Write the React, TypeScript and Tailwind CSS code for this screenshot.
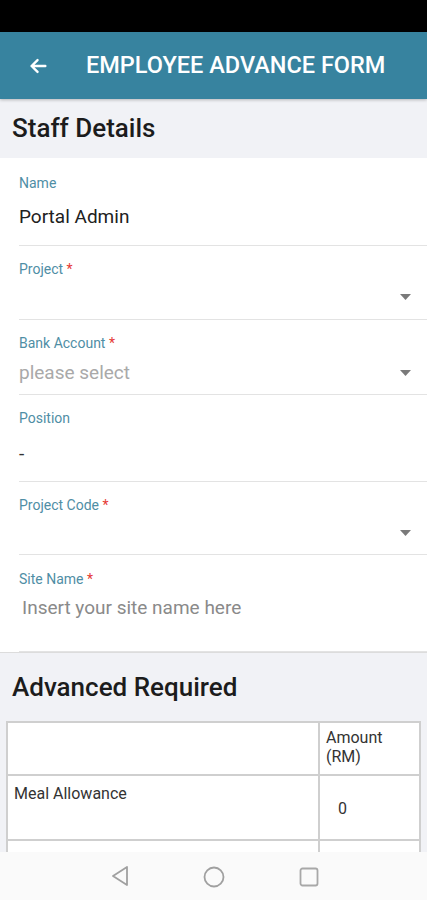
import { ReactNode } from 'react';

const Caret = () => (
  <svg width="11" height="6" viewBox="0 0 11 6" className="mr-[16px]">
    <path d="M0 0 L11 0 L5.5 6 Z" fill="#7a7a7a" />
  </svg>
);

function Field({ label, required = false, h, pt = 'pt-[15px]', mt, children }: {
  label: string; required?: boolean; h: string; pt?: string; mt: string; children: ReactNode;
}) {
  return (
    <div className={`ml-[19px] border-b border-[#e3e3e3] ${h} ${pt}`}>
      <div className="text-[14px] leading-[16px] text-[#4f8ea5]">
        {label}
        {required && <span className="text-[#e53935]"> *</span>}
      </div>
      <div className={`${mt} h-[24px] flex items-center justify-between`}>{children}</div>
    </div>
  );
}

const rows = [
  { label: 'Meal Allowance', amount: '0' },
  { label: 'Accommodation / Hotel', amount: '0' },
];

export default function App() {
  return (
    <div className="w-[427px] min-h-[900px] bg-[#f1f2f6] font-['Roboto',sans-serif] pb-[48px]">
      {/* status bar */}
      <div className="h-[32px] bg-black" />

      {/* app bar */}
      <div className="h-[67px] bg-[#37839f] flex items-center shadow-[0_1px_3px_rgba(0,0,0,0.25)]">
        <svg width="22" height="22" viewBox="0 0 24 24" className="ml-[27px]">
          <path d="M20 12H5 M11.5 5.5L5 12l6.5 6.5" fill="none" stroke="#fff" strokeWidth="2.6" strokeLinecap="round" strokeLinejoin="round" />
        </svg>
        <h1 className="ml-[37px] text-white text-[23.5px] font-medium">EMPLOYEE ADVANCE FORM</h1>
      </div>

      {/* staff details */}
      <div className="h-[59px] flex items-center px-[12px]">
        <h2 className="text-[26px] text-[#1c1c1c] font-medium">Staff Details</h2>
      </div>

      <div className="bg-white border-b border-[#dcdcdc]">
        <Field label="Name" h="h-[88px]" pt="pt-[17px]" mt="mt-[14px]">
          <span className="text-[19px] text-[#212121]">Portal Admin</span>
        </Field>
        <Field label="Project" required h="h-[74px]" mt="mt-[8px]">
          <span />
          <Caret />
        </Field>
        <Field label="Bank Account" required h="h-[75px]" mt="mt-[10px]">
          <span className="text-[19px] text-[#a9a9a9]">please select</span>
          <Caret />
        </Field>
        <Field label="Position" h="h-[87px]" mt="mt-[16px]">
          <span className="text-[19px] text-[#333]">-</span>
        </Field>
        <Field label="Project Code" required h="h-[73px]" mt="mt-[8px]">
          <span />
          <Caret />
        </Field>
        <Field label="Site Name" required h="h-[97px]" pt="pt-[16px]" mt="mt-[9px]">
          <span className="ml-[3px] text-[19px] text-[#8a8a8a]">Insert your site name here</span>
        </Field>
      </div>

      {/* advanced required */}
      <div className="h-[68px] flex items-center px-[12px]">
        <h2 className="text-[26px] text-[#1c1c1c] font-medium">Advanced Required</h2>
      </div>

      <div className="px-[6px]">
        <table className="w-[415px] bg-white border-collapse text-[16px] text-[#333]">
          <tbody>
            <tr className="h-[53px]">
              <td className="border-2 border-[#cfcfcf] w-[312px]" />
              <td className="border-2 border-[#cfcfcf] align-top px-[6px] pt-[5px] leading-[19px]">
                Amount<br />(RM)
              </td>
            </tr>
            {rows.map((r) => (
              <tr key={r.label} className="h-[65px]">
                <td className="border-2 border-[#cfcfcf] align-top px-[6px] pt-[6px]">{r.label}</td>
                <td className="border-2 border-[#cfcfcf] px-[18px] pt-[2px]">{r.amount}</td>
              </tr>
            ))}
          </tbody>
        </table>
      </div>

      {/* nav bar */}
      <div className="fixed bottom-0 left-0 w-[427px] h-[48px] bg-[#fafafa]">
        <svg width="20" height="22" viewBox="0 0 20 22" className="absolute left-[110px] top-[13px]">
          <path d="M17 2 L3 11 L17 20 Z" fill="none" stroke="#a0a0a0" strokeWidth="1.8" strokeLinejoin="round" />
        </svg>
        <svg width="24" height="24" viewBox="0 0 24 24" className="absolute left-[202px] top-[13px]">
          <circle cx="12" cy="12" r="9.5" fill="none" stroke="#a0a0a0" strokeWidth="1.8" />
        </svg>
        <svg width="22" height="22" viewBox="0 0 22 22" className="absolute left-[298px] top-[14px]">
          <rect x="2.5" y="2.5" width="17" height="17" rx="2" fill="none" stroke="#a8a8a8" strokeWidth="1.8" />
        </svg>
      </div>
    </div>
  );
}
